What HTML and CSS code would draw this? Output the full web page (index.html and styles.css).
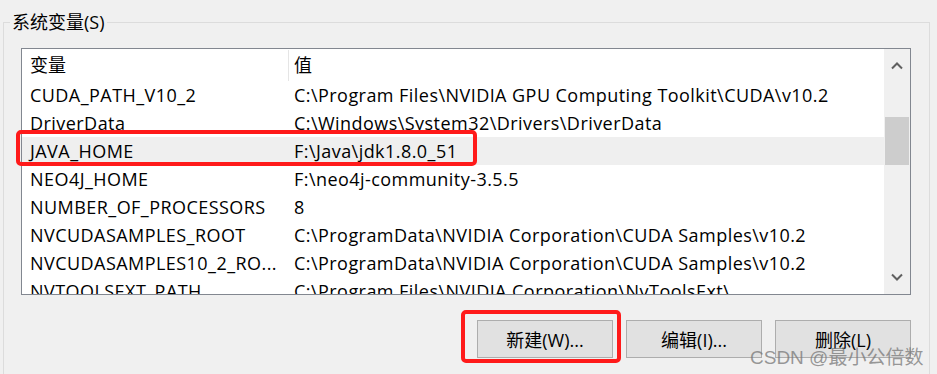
FILE: index.html
```html
<!DOCTYPE html>
<html lang="zh-CN">
<head>
<meta charset="utf-8">
<title>系统变量</title>
<link rel="stylesheet" href="styles.css">
</head>
<body>
<fieldset class="group">
  <legend class="group-title">系统变量(S)</legend>
  <div class="listbox">
    <div class="list">
      <div class="row header">
        <div class="cell name">变量</div>
        <div class="cell value">值</div>
      </div>
      <div class="row"><div class="cell name">CUDA_PATH_V10_2</div><div class="cell value">C:\Program Files\NVIDIA GPU Computing Toolkit\CUDA\v10.2</div></div>
      <div class="row"><div class="cell name">DriverData</div><div class="cell value">C:\Windows\System32\Drivers\DriverData</div></div>
      <div class="row selected"><div class="cell name">JAVA_HOME</div><div class="cell value">F:\Java\jdk1.8.0_51</div></div>
      <div class="row"><div class="cell name">NEO4J_HOME</div><div class="cell value">F:\neo4j-community-3.5.5</div></div>
      <div class="row"><div class="cell name">NUMBER_OF_PROCESSORS</div><div class="cell value">8</div></div>
      <div class="row"><div class="cell name">NVCUDASAMPLES_ROOT</div><div class="cell value">C:\ProgramData\NVIDIA Corporation\CUDA Samples\v10.2</div></div>
      <div class="row"><div class="cell name">NVCUDASAMPLES10_2_RO...</div><div class="cell value">C:\ProgramData\NVIDIA Corporation\CUDA Samples\v10.2</div></div>
      <div class="row last"><div class="cell name">NVTOOLSEXT_PATH</div><div class="cell value">C:\Program Files\NVIDIA Corporation\NvToolsExt\</div></div>
    </div>
    <div class="scrollbar">
      <div class="arrow">
        <svg width="12" height="8" viewBox="0 0 12 8"><path d="M1 6.5 L6 1.5 L11 6.5" fill="none" stroke="#606060" stroke-width="2"/></svg>
      </div>
      <div class="track"><div class="thumb"></div></div>
      <div class="arrow">
        <svg width="12" height="8" viewBox="0 0 12 8"><path d="M1 1.5 L6 6.5 L11 1.5" fill="none" stroke="#606060" stroke-width="2"/></svg>
      </div>
    </div>
    <span class="mark mark-row"></span>
  </div>
  <div class="buttons">
    <button class="btn btn-new">新建(W)...<span class="mark mark-btn"></span></button>
    <button class="btn">编辑(I)...</button>
    <button class="btn">删除(L)</button>
  </div>
</fieldset>
<div class="watermark">CSDN @最小公倍数</div>
</body>
</html>
```

FILE: styles.css
```css
html, body {
  margin: 0;
  padding: 0;
}
body {
  width: 937px;
  height: 374px;
  overflow: hidden;
  background: #f0f0f0;
  font-family: "Open Sans", "Noto Sans CJK SC", sans-serif;
  font-size: 18px;
  color: #000;
  position: relative;
}
.group {
  margin: 10px 0 0 3px;
  width: 927px;
  height: 364px;
  box-sizing: border-box;
  border: 1px solid #dcdcdc;
  border-bottom: 0;
  padding: 0;
  min-width: 0;
}
.group-title {
  margin-left: 6px;
  padding: 0 2px;
  line-height: 24px;
  height: 24px;
}
.listbox {
  position: relative;
  margin: 14px 0 0 17px;
  width: 890px;
  height: 247px;
  box-sizing: border-box;
  border: 1px solid #828790;
  background: #fff;
  display: grid;
  grid-template-columns: 1fr 26px;
}
.list {
  overflow: hidden;
  letter-spacing: 0.45px;
}
.row {
  display: grid;
  grid-template-columns: 267px 1fr;
  height: 28px;
  align-items: center;
  white-space: nowrap;
}
.row.header {
  height: 32px;
  letter-spacing: 0;
}
.row.header .name {
  border-right: 1px solid #e5e5e5;
  height: 31px;
  line-height: 31px;
}
.row.last {
  height: 21px;
  align-items: start;
}
.cell {
  overflow: hidden;
  line-height: 28px;
}
.name {
  padding-left: 8px;
}
.value {
  padding-left: 5px;
}
.row.selected {
  background: #efefef;
}
.scrollbar {
  background: #f0f0f0;
  display: flex;
  flex-direction: column;
  padding: 0 1px;
}
.arrow {
  height: 34px;
  display: flex;
  align-items: center;
  justify-content: center;
}
.track {
  flex: 1;
  padding-top: 34px;
}
.thumb {
  height: 48px;
  background: #cdcdcd;
}
.buttons {
  display: flex;
  gap: 13px;
  justify-content: flex-end;
  margin: 25px 18px 0 0;
}
.btn {
  position: relative;
  width: 136px;
  height: 38px;
  box-sizing: border-box;
  border: 1px solid #adadad;
  background: #e1e1e1;
  font-family: "Open Sans", "Noto Sans CJK SC", sans-serif;
  font-size: 18px;
  color: #000;
  padding: 0;
}
.mark {
  position: absolute;
  border: 4px solid #ff1a1a;
  border-radius: 5px;
  pointer-events: none;
  box-sizing: border-box;
}
.mark-row {
  left: -6px;
  top: 81px;
  width: 461px;
  height: 36px;
}
.mark-btn {
  left: -17px;
  top: -11px;
  width: 160px;
  height: 53px;
}
.watermark {
  position: absolute;
  left: 750px;
  top: 342px;
  font-family: "Liberation Sans", "Noto Sans CJK SC", sans-serif;
  font-size: 19px;
  color: rgba(120, 120, 120, 0.75);
  white-space: nowrap;
}
```
